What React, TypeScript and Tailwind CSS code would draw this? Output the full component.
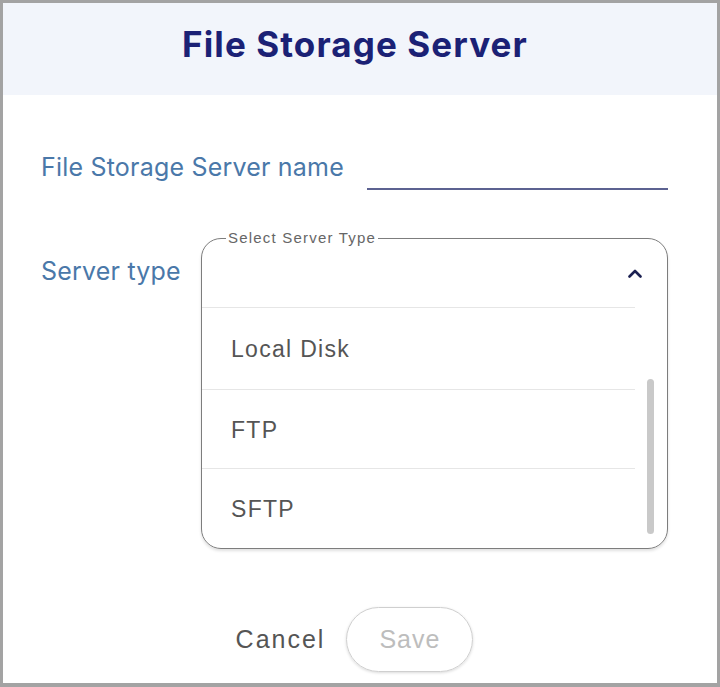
import React from 'react';

const options = [
  { label: 'Local Disk', height: 'h-[81px]' },
  { label: 'FTP', height: 'h-[78px]' },
  { label: 'SFTP', height: 'h-[78px]' },
];

const ChevronUp = () => (
  <svg width="14" height="9" viewBox="0 0 14 9" fill="none">
    <path d="M1.5 7.5 L7 2 L12.5 7.5" stroke="#1c2152" strokeWidth="2.6" strokeLinecap="round" strokeLinejoin="round" />
  </svg>
);

export default function App() {
  return (
    <div className="w-[720px] h-[687px] bg-white border-[#a3a3a3] border-t-[3px] border-l-[3px] border-r-[3px] border-b-[4px] flex flex-col font-['Inter',sans-serif]">
      <div className="h-[92px] bg-[#f2f5fb] flex items-center justify-center pr-[10px]">
        <h1 className="text-[35px] font-bold text-[#1b2175] tracking-[1.1px] leading-none pb-[10px]">File Storage Server</h1>
      </div>

      <div className="flex flex-col pl-[38px] pr-[49px] pt-[57px]">
        <div className="flex items-start justify-between">
          <label className="text-[25px] leading-[30px] tracking-[0.2px] text-[#4a78a9]">File Storage Server name</label>
          <div className="w-[301px] h-[38px] border-b-2 border-[#5c6291]" />
        </div>

        <div className="flex items-start justify-between mt-[48px]">
          <label className="text-[25px] leading-[30px] tracking-[0.2px] text-[#4a78a9] mt-[18px]">Server type</label>
          <div className="relative w-[467px] h-[311px] rounded-[20px] border-[1.5px] border-[#7d7d7d] shadow-[0_2px_3px_rgba(0,0,0,0.12)] flex flex-col">
            <span className="absolute -top-[10px] left-[24px] bg-white px-[2px] text-[15px] leading-[18px] tracking-[1.2px] text-[#666] font-['Liberation_Sans',sans-serif]">
              Select Server Type
            </span>
            <div className="h-[68px] flex items-center justify-end pr-[25px]">
              <ChevronUp />
            </div>
            <div className="h-px bg-[#e6e6e6] mr-[32px]" />
            <div className="flex flex-1">
              <div className="flex-1 flex flex-col">
                {options.map((o, i) => (
                  <div key={o.label} className="flex flex-col">
                    <div className={`${o.height} flex items-center pl-[29px] pt-[2px] text-[23px] tracking-[1.3px] text-[#555] font-['Liberation_Sans',sans-serif]`}>
                      {o.label}
                    </div>
                    {i < options.length - 1 && <div className="h-px bg-[#e6e6e6]" />}
                  </div>
                ))}
              </div>
              <div className="w-[32px] pt-[71px] pl-[12px]">
                <div className="w-[7px] h-[155px] rounded-full bg-[#c9c9c9]" />
              </div>
            </div>
          </div>
        </div>
      </div>

      <div className="flex items-center justify-center gap-[21px] mt-[58px] pr-[11px] font-['Liberation_Sans',sans-serif]">
        <button className="text-[25px] tracking-[2px] text-[#555]">Cancel</button>
        <button className="w-[127px] h-[65px] rounded-full border-[1.5px] border-[#cfcfcf] shadow-[0_1px_3px_rgba(0,0,0,0.15)] text-[25px] tracking-[1px] text-[#bdbdbd]">
          Save
        </button>
      </div>
    </div>
  );
}
